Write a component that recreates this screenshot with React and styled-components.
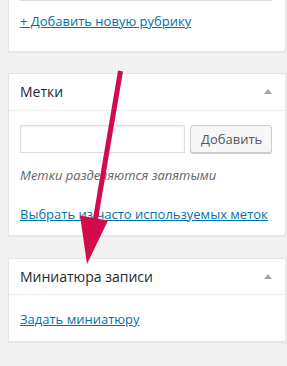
import React from 'react';
import styled, { createGlobalStyle } from 'styled-components';

const GlobalStyle = createGlobalStyle`
  html, body {
    margin: 0;
    padding: 0;
    background: #f1f1f1;
  }
  body {
    font-family: 'Open Sans', 'Liberation Sans', sans-serif;
    font-size: 13px;
    color: #444;
  }
`;

const Page = styled.div`
  position: relative;
  width: 287px;
  height: 366px;
  overflow: hidden;
  padding: 0 1px 0 8px;
  box-sizing: border-box;
`;

const Postbox = styled.div`
  background: #fff;
  border: 1px solid #e5e5e5;
  border-top: ${p => (p.$cut ? 'none' : '1px solid #e5e5e5')};
  box-shadow: 0 1px 1px rgba(0, 0, 0, 0.04);
  margin-top: ${p => p.$gap || 0}px;
`;

const Header = styled.div`
  display: flex;
  align-items: center;
  justify-content: space-between;
  padding: 8px 13px 8px 11px;
  border-bottom: 1px solid #eee;
  font-size: 14px;
  line-height: 19.6px;
  color: #23282d;
`;

const Toggle = styled.span`
  width: 0;
  height: 0;
  border-left: 4px solid transparent;
  border-right: 4px solid transparent;
  border-bottom: 5px solid #a0a5aa;
`;

const Inside = styled.div`
  padding: ${p => p.$top || 0}px 12px ${p => p.$bottom || 12}px 11px;
`;

const ListEnd = styled.div`
  border-top: 1px solid #ddd;
  margin: 0 1px 11px 0;
`;

const LinkText = styled.a`
  display: block;
  color: #0073aa;
  text-decoration: underline;
  line-height: 19px;
  margin-top: ${p => p.$gap || 0}px;
  cursor: pointer;
`;

const TagRow = styled.div`
  display: flex;
  gap: 5px;
  align-items: center;
`;

const TagInput = styled.input`
  width: 165px;
  height: 28px;
  box-sizing: border-box;
  border: 1px solid #ddd;
  box-shadow: inset 0 1px 2px rgba(0, 0, 0, 0.07);
  margin: 0;
  padding: 3px 5px;
  font: inherit;
  outline: none;
`;

const Button = styled.button`
  height: 28px;
  box-sizing: border-box;
  padding: 0 10px 1px;
  margin: 0;
  background: #f7f7f7;
  border: 1px solid #ccc;
  border-radius: 3px;
  box-shadow: 0 1px 0 #ccc;
  color: #555;
  font-family: inherit;
  font-size: 13px;
  line-height: 26px;
  width: 82px;
`;

const Hint = styled.p`
  margin: 13px 0 0;
  font-style: italic;
  color: #666;
  line-height: 19px;
`;

const Arrow = styled.svg`
  position: absolute;
  left: 0;
  top: 0;
  pointer-events: none;
`;

export default function App() {
  return (
    <Page>
      <GlobalStyle />
      <Postbox $cut>
        <Inside $bottom={20}>
          <ListEnd />
          <LinkText>+ Добавить новую рубрику</LinkText>
        </Inside>
      </Postbox>

      <Postbox $gap={21}>
        <Header>
          <span>Метки</span>
          <Toggle />
        </Header>
        <Inside $top={14} $bottom={11}>
          <TagRow>
            <TagInput type="text" />
            <Button>Добавить</Button>
          </TagRow>
          <Hint>Метки разделяются запятыми</Hint>
          <LinkText $gap={20}>Выбрать из часто используемых меток</LinkText>
        </Inside>
      </Postbox>

      <Postbox $gap={22}>
        <Header>
          <span>Миниатюра записи</span>
          <Toggle />
        </Header>
        <Inside $top={15} $bottom={12}>
          <LinkText>Задать миниатюру</LinkText>
        </Inside>
      </Postbox>

      <Arrow width="287" height="366" viewBox="0 0 287 366">
        <line x1="120.5" y1="71" x2="95" y2="222" stroke="#d20c4b" strokeWidth="5" />
        <polygon points="80,215.5 108,220.5 87,264" fill="#d20c4b" />
      </Arrow>
    </Page>
  );
}
